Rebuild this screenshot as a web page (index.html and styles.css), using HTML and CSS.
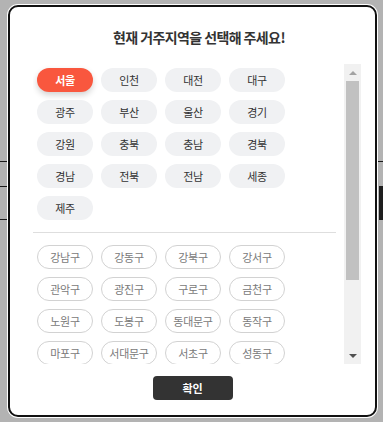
FILE: index.html
```html
<html>
  <head>
    <meta charset="UTF-8">
    <link rel="stylesheet" href="styles.css">
  </head>
  <body>
    <div class="modal">
      <h1 class="title">현재 거주지역을 선택해 주세요!</h1>

      <div class="scroll">
        <div class="list">
          <div class="chips">
            <span class="chip on">서울</span>
            <span class="chip">인천</span>
            <span class="chip">대전</span>
            <span class="chip">대구</span>
            <span class="chip">광주</span>
            <span class="chip">부산</span>
            <span class="chip">울산</span>
            <span class="chip">경기</span>
            <span class="chip">강원</span>
            <span class="chip">충북</span>
            <span class="chip">충남</span>
            <span class="chip">경북</span>
            <span class="chip">경남</span>
            <span class="chip">전북</span>
            <span class="chip">전남</span>
            <span class="chip">세종</span>
            <span class="chip">제주</span>
          </div>

          <hr class="divider">

          <div class="chips">
            <span class="chip line">강남구</span>
            <span class="chip line">강동구</span>
            <span class="chip line">강북구</span>
            <span class="chip line">강서구</span>
            <span class="chip line">관악구</span>
            <span class="chip line">광진구</span>
            <span class="chip line">구로구</span>
            <span class="chip line">금천구</span>
            <span class="chip line">노원구</span>
            <span class="chip line">도봉구</span>
            <span class="chip line">동대문구</span>
            <span class="chip line">동작구</span>
            <span class="chip line">마포구</span>
            <span class="chip line">서대문구</span>
            <span class="chip line">서초구</span>
            <span class="chip line">성동구</span>
          </div>
        </div>

        <div class="bar">
          <div class="arrow up"></div>
          <div class="track">
            <div class="thumb"></div>
          </div>
          <div class="arrow down"></div>
        </div>
      </div>

      <button class="ok">확인</button>
    </div>
  </body>
</html>
```

FILE: styles.css
```css
body {
  margin: 0;
  padding: 5px 0 0 8px;
  width: 383px;
  height: 422px;
  box-sizing: border-box;
  overflow: hidden;
  font-family: "Noto Sans CJK KR", "Noto Sans", sans-serif;
  background:
    linear-gradient(#1a1a1a, #1a1a1a) 0 161px / 100% 1px no-repeat,
    linear-gradient(#1a1a1a, #1a1a1a) 0 186px / 8px 1px no-repeat,
    linear-gradient(#1a1a1a, #1a1a1a) 0 219px / 8px 1px no-repeat,
    linear-gradient(#1e1e1e, #1e1e1e) 379px 186px / 4px 34px no-repeat,
    #b3b3b3;
}

.modal {
  width: 369px;
  height: 412px;
  box-sizing: border-box;
  border: 2px solid #111;
  border-radius: 10px;
  box-shadow: 0 0 0 1px #fff;
  background: #fff;
  padding: 20px 14px 0 23px;
  display: flex;
  flex-direction: column;
}

.title {
  margin: 0;
  font-size: 14px;
  line-height: 20px;
  font-weight: bold;
  color: #333;
  text-align: center;
  letter-spacing: -0.6px;
  padding-left: 4px;
}

.scroll {
  margin-top: 17px;
  height: 300px;
  display: flex;
}

.list {
  flex: 1;
  overflow: hidden;
  padding-top: 4px;
}

.chips {
  display: grid;
  grid-template-columns: repeat(4, 56px);
  gap: 8px;
  padding-left: 4px;
}

.chip {
  height: 24px;
  box-sizing: border-box;
  border-radius: 12px;
  background: #f0f1f3;
  color: #333;
  font-size: 11px;
  line-height: 24px;
  text-align: center;
  letter-spacing: -0.3px;
}

.chip.on {
  background: #f9573e;
  color: #fff;
  font-weight: bold;
  box-shadow: 0 3px 6px rgba(0, 0, 0, 0.18);
}

.chip.line {
  background: #fff;
  border: 1px solid #d2d2d2;
  color: #7a7a7a;
  line-height: 22px;
}

.divider {
  border: 0;
  border-top: 1px solid #dedede;
  margin: 12px 8px 12px 0;
}

.bar {
  width: 17px;
  background: #f1f1f1;
  display: flex;
  flex-direction: column;
}

.arrow {
  height: 17px;
  display: flex;
  align-items: center;
  justify-content: center;
}

.arrow::before {
  content: "";
  border-left: 4px solid transparent;
  border-right: 4px solid transparent;
}

.arrow.up::before {
  border-bottom: 4px solid #a3a3a3;
}

.arrow.down::before {
  border-top: 4px solid #505050;
}

.track {
  flex: 1;
  padding: 0 2px;
}

.thumb {
  height: 199px;
  background: #c1c1c1;
}

.ok {
  align-self: center;
  margin: 12px 0 0 -9px;
  width: 80px;
  height: 24px;
  border: 0;
  border-radius: 4px;
  background: #333;
  color: #fff;
  font-family: "Noto Sans CJK KR", "Noto Sans", sans-serif;
  font-size: 11px;
  font-weight: bold;
  padding: 0;
}
```
